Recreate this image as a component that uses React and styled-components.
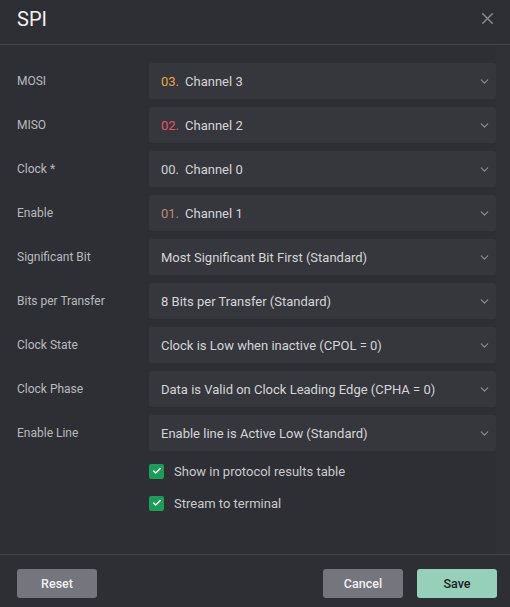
import React from "react";
import styled, { createGlobalStyle } from "styled-components";
import { ChevronDown, X, Check } from "lucide-react";

const GlobalStyle = createGlobalStyle`
  html, body {
    margin: 0;
    padding: 0;
    background: #2e2f34;
  }
  body {
    font-family: Roboto, "Liberation Sans", sans-serif;
  }
  * {
    box-sizing: border-box;
  }
`;

const Dialog = styled.div`
  width: 510px;
  height: 607px;
  display: flex;
  flex-direction: column;
  background: #2e2f34;
  color: #d2d3d6;
`;

const Header = styled.div`
  height: 45px;
  display: flex;
  align-items: center;
  justify-content: space-between;
  padding: 0 13px 0 17px;
  border-bottom: 1px solid #46474c;
`;

const Title = styled.h2`
  margin: 0;
  font-size: 20px;
  font-weight: 400;
  color: #f2f2f3;
  padding-bottom: 7px;
`;

const CloseBtn = styled.button`
  background: none;
  border: none;
  padding: 0;
  margin-top: -7px;
  color: #85868b;
  display: flex;
  cursor: pointer;
`;

const Body = styled.div`
  flex: 1;
  display: flex;
`;

const Content = styled.div`
  flex: 1;
  padding: 18px 0 0 17px;
`;

const Gutter = styled.div`
  width: 14px;
  background: #303136;
`;

const Fields = styled.div`
  display: flex;
  flex-direction: column;
  gap: 8px;
`;

const Row = styled.div`
  display: flex;
  align-items: center;
  height: 36px;
`;

const Label = styled.label`
  width: 132px;
  font-size: 12px;
  color: #b9babe;
  padding-bottom: 1px;
`;

const Select = styled.div`
  flex: 1;
  height: 36px;
  display: flex;
  align-items: center;
  justify-content: space-between;
  padding: 0 5px 0 12px;
  background: #36373c;
  border-radius: 3px;
  font-size: 13px;
  color: #d4d5d8;
`;

const Num = styled.span`
  color: ${(p) => p.color};
  margin-right: 6px;
`;

const Chevron = styled(ChevronDown)`
  color: #8d8e93;
`;

const Checks = styled.div`
  padding: 4px 0 0 132px;
  display: flex;
  flex-direction: column;
`;

const CheckRow = styled.label`
  height: 32px;
  display: flex;
  align-items: center;
  gap: 10px;
  font-size: 13px;
  color: #c9cacd;
`;

const Box = styled.span`
  width: 15px;
  height: 15px;
  border-radius: 2px;
  background: #1d9c57;
  display: flex;
  align-items: center;
  justify-content: center;
  color: #fff;
`;

const Footer = styled.div`
  height: 53px;
  border-top: 1px solid #46474c;
  display: flex;
  align-items: flex-start;
  padding: 14px 13px 0 17px;
  gap: 14px;
`;

const Button = styled.button`
  width: 80px;
  height: 29px;
  border: none;
  border-radius: 3px;
  font-family: Roboto, "Liberation Sans", sans-serif;
  font-size: 12.5px;
  font-weight: 500;
  background: ${(p) => (p.primary ? "#96cfba" : "#74757d")};
  color: ${(p) => (p.primary ? "#1c1d21" : "#f0f0f2")};
  margin-left: ${(p) => (p.push ? "auto" : "0")};
  cursor: pointer;
`;

const fields = [
  { label: "MOSI", num: "03.", color: "#e9a24e", text: "Channel 3" },
  { label: "MISO", num: "02.", color: "#e5546f", text: "Channel 2" },
  { label: "Clock *", num: "00.", color: "#cfd0d3", text: "Channel 0" },
  { label: "Enable", num: "01.", color: "#b98b74", text: "Channel 1" },
  { label: "Significant Bit", text: "Most Significant Bit First (Standard)" },
  { label: "Bits per Transfer", text: "8 Bits per Transfer (Standard)" },
  { label: "Clock State", text: "Clock is Low when inactive (CPOL = 0)" },
  { label: "Clock Phase", text: "Data is Valid on Clock Leading Edge (CPHA = 0)" },
  { label: "Enable Line", text: "Enable line is Active Low (Standard)" },
];

export default function App() {
  return (
    <>
      <GlobalStyle />
      <Dialog>
        <Header>
          <Title>SPI</Title>
          <CloseBtn type="button">
            <X size={19} strokeWidth={2} />
          </CloseBtn>
        </Header>
        <Body>
          <Content>
            <Fields>
              {fields.map((f) => (
                <Row key={f.label}>
                  <Label>{f.label}</Label>
                  <Select>
                    <span>
                      {f.num && <Num color={f.color}>{f.num}</Num>}
                      {f.text}
                    </span>
                    <Chevron size={13} strokeWidth={2} />
                  </Select>
                </Row>
              ))}
            </Fields>
            <Checks>
              <CheckRow>
                <Box>
                  <Check size={10} strokeWidth={3.5} />
                </Box>
                Show in protocol results table
              </CheckRow>
              <CheckRow>
                <Box>
                  <Check size={10} strokeWidth={3.5} />
                </Box>
                Stream to terminal
              </CheckRow>
            </Checks>
          </Content>
          <Gutter />
        </Body>
        <Footer>
          <Button type="button">Reset</Button>
          <Button type="button" push>
            Cancel
          </Button>
          <Button type="button" primary>
            Save
          </Button>
        </Footer>
      </Dialog>
    </>
  );
}
